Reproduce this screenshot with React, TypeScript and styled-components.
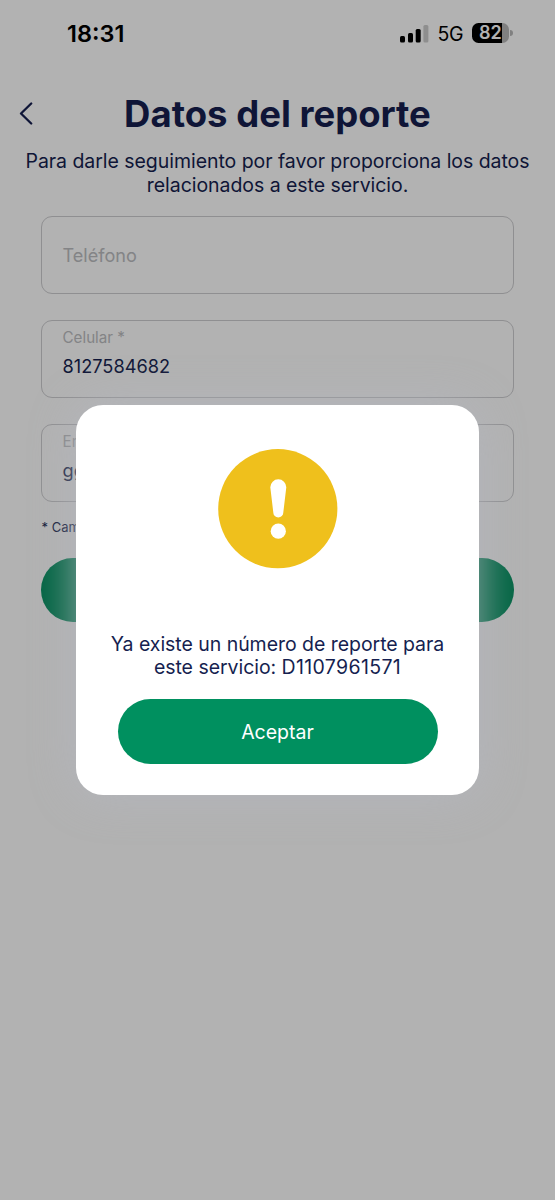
import React from "react";
import styled, { createGlobalStyle } from "styled-components";

const GlobalStyle = createGlobalStyle`
  *, *::before, *::after { box-sizing: border-box; }
  body {
    margin: 0;
    background: #fff;
    color: #161f50;
    font-family: Inter, "Liberation Sans", sans-serif;
  }
  button { font-family: inherit; border: 0; padding: 0; }
`;

const Screen = styled.main`
  position: relative;
  height: 1200px;
  overflow: hidden;
  background: #fff;
`;

const StatusBar = styled.div`
  display: flex;
  align-items: center;
  justify-content: space-between;
  height: 67px;
  margin-bottom: 1px;
  padding: 0 46px 0 67px;
  color: #000;
`;

const Clock = styled.time`
  font-size: 23.5px;
  font-weight: 600;
  letter-spacing: 0;
`;

const StatusIcons = styled.div`
  display: flex;
  align-items: center;
`;

const Network = styled.span`
  margin: 1px 9px 0 9px;
  font-size: 19.5px;
  line-height: 22px;
  letter-spacing: -0.5px;
`;

const Battery = styled.div`
  position: relative;
  width: 37px;
  height: 20px;
  margin-top: -1px;
  border-radius: 6.5px;
  background: linear-gradient(90deg, #000 30px, #b8b8b8 30px);
  color: #fff;
  font-size: 18px;
  font-weight: 600;
  line-height: 20px;
  padding-left: 7px;
  &::after {
    content: "";
    position: absolute;
    left: 38px;
    top: 7px;
    width: 2.5px;
    height: 6px;
    border-radius: 0 3px 3px 0;
    background: #b8b8b8;
  }
`;

const Header = styled.header`
  display: grid;
  grid-template-columns: 60px 1fr 60px;
  align-items: center;
  height: 92px;
  margin-bottom: -10px;
`;

const BackButton = styled.button`
  display: flex;
  width: 16px;
  margin-left: 18px;
  background: none;
  color: inherit;
`;

const Title = styled.h1`
  margin: 0;
  text-align: center;
  white-space: nowrap;
  font-size: 36.5px;
  font-weight: 700;
  line-height: 44px;
`;

const Copy = styled.p`
  margin: 0;
  text-align: center;
  white-space: nowrap;
  font-size: 19.5px;
  line-height: 23.5px;
  letter-spacing: -0.045px;
`;

const Form = styled.form`
  display: flex;
  flex-direction: column;
  gap: 26px;
  padding: 19px 41px 0;
`;

const Field = styled.div`
  display: flex;
  flex-direction: column;
  justify-content: center;
  height: 78px;
  padding: 0 20.5px 12px;
  border: 1px solid #cdcdd0;
  border-radius: 11px;
`;

const Placeholder = styled.span`
  padding-top: 12px;
  color: #bcbdc1;
  font-size: 18.1px;
`;

const Label = styled.label`
  color: #bcbdc1;
  font-size: 15.2px;
  line-height: 20px;
`;

const Value = styled.span`
  margin-top: 6px;
  font-size: 18.2px;
  line-height: 24px;
`;

const Note = styled.small`
  margin: -9px 0 -3px;
  padding-left: 0.5px;
  font-size: 13px;
  line-height: 16px;
`;

const PillButton = styled.button<{ $height: number }>`
  height: ${({ $height }) => $height}px;
  border-radius: 33px;
  background: #00905f;
  color: #fff;
  font-size: 19.5px;
  letter-spacing: 0;
`;

const Backdrop = styled.div`
  position: absolute;
  inset: 0;
  display: flex;
  align-items: center;
  justify-content: center;
  background: rgba(0, 0, 0, 0.3);
`;

const Dialog = styled.section`
  display: flex;
  flex-direction: column;
  align-items: center;
  width: 403px;
  height: 390px;
  padding: 44px 41px 31px;
  border-radius: 27px;
  background: #fff;
  box-shadow: 0 0 46px rgba(180, 182, 190, 0.85);
`;

const DialogActions = styled.div`
  display: grid;
  width: 320px;
  margin-top: auto;
`;

const DialogCopy = styled(Copy)`
  margin-top: 64px;
  line-height: 23px;
`;

const ReportNumber = styled.span`
  letter-spacing: 0.35px;
`;

export default function App() {
  return (
    <Screen>
      <GlobalStyle />
      <StatusBar>
        <Clock>18:31</Clock>
        <StatusIcons>
          <svg width="29" height="20" viewBox="0 0 29 20">
            <rect x="0" y="12" width="5" height="6.5" rx="1.5" />
            <rect x="8" y="9" width="5" height="9.5" rx="1.5" />
            <rect x="15.7" y="5" width="5" height="13.5" rx="1.5" />
            <rect x="23.4" y="1" width="5" height="17.5" rx="1.5" fill="#cccccc" />
          </svg>
          <Network>5G</Network>
          <Battery>82</Battery>
        </StatusIcons>
      </StatusBar>
      <Header>
        <BackButton type="button" aria-label="Atrás">
          <svg width="16" height="24" viewBox="0 0 16 24" fill="none" stroke="currentColor" strokeWidth="2.3" strokeLinecap="round" strokeLinejoin="round">
            <path d="M13.2 1.500 3 11.500l10.200 10" />
          </svg>
        </BackButton>
        <Title>Datos del reporte</Title>
      </Header>
      <Copy>
        Para darle seguimiento por favor proporciona los datos
        <br />
        relacionados a este servicio.
      </Copy>
      <Form>
        <Field>
          <Placeholder>Teléfono</Placeholder>
        </Field>
        <Field>
          <Label>Celular *</Label>
          <Value>8127584682</Value>
        </Field>
        <Field>
          <Label>Email *</Label>
          <Value>gg</Value>
        </Field>
        <Note>* Campos</Note>
        <PillButton type="button" $height={64} />
      </Form>
      <Backdrop>
        <Dialog role="dialog">
          <svg width="120" height="120" viewBox="0 0 120 120">
            <circle cx="59.800" cy="59.700" r="59.600" fill="#efc01c" />
            <path d="M52.300 38.300a8 8 0 0 1 16 0L65.300 63.500a5 5 0 0 1-10 0Z" fill="#fff" />
            <circle cx="60.300" cy="82.200" r="7.600" fill="#fff" />
          </svg>
          <DialogCopy>
            Ya existe un número de reporte para
            <br />
            este servicio: <ReportNumber>D1107961571</ReportNumber>
          </DialogCopy>
          <DialogActions>
            <PillButton type="button" $height={65}>Aceptar</PillButton>
          </DialogActions>
        </Dialog>
      </Backdrop>
    </Screen>
  );
}
